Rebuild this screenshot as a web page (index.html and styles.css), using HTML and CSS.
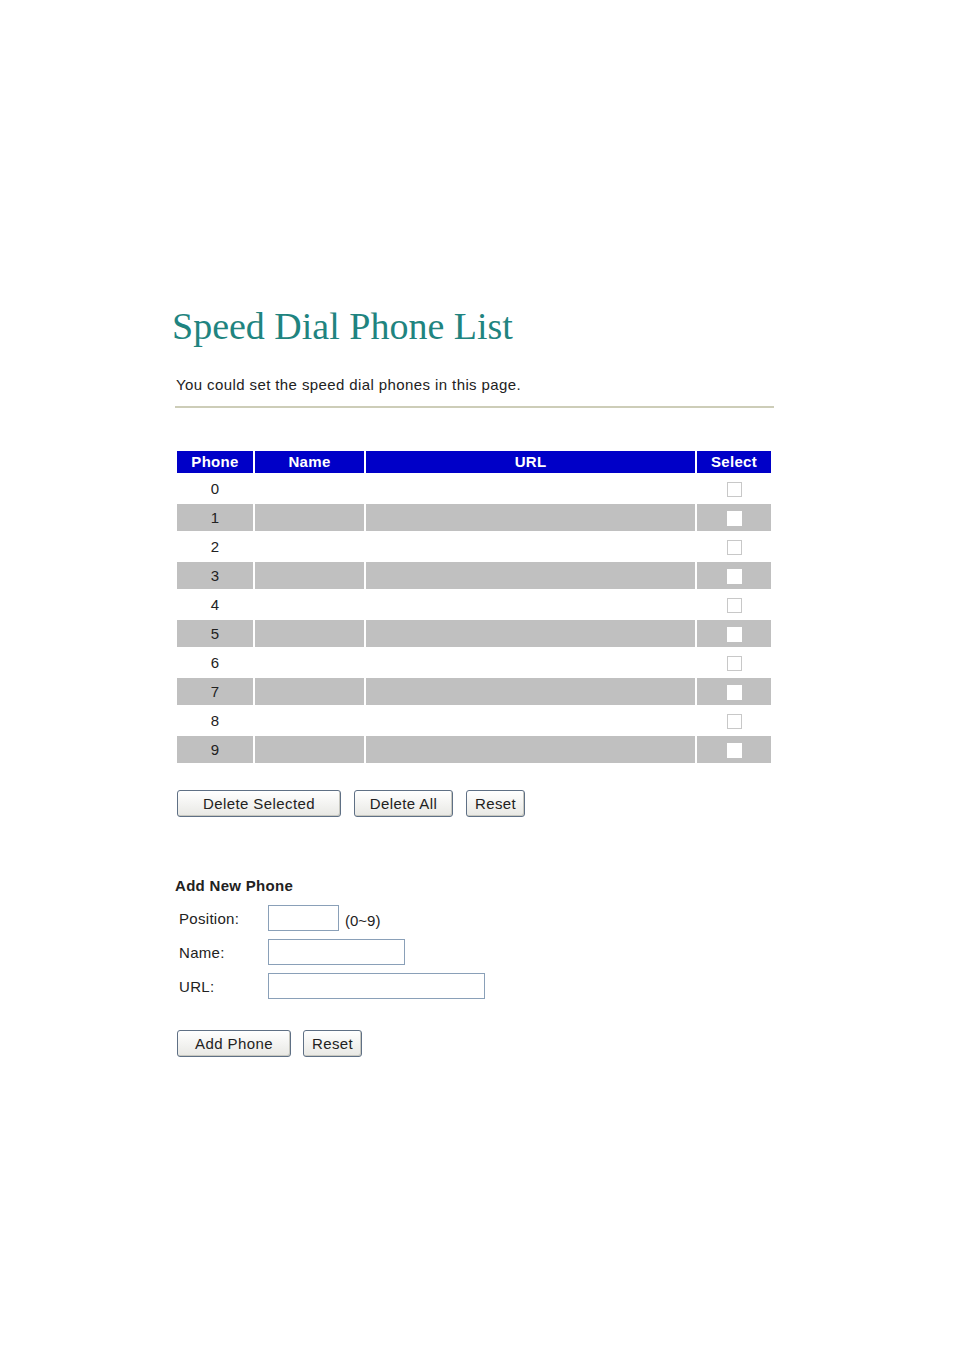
FILE: index.html
```html
<!DOCTYPE html>
<html>
<head>
<meta charset="utf-8">
<link rel="stylesheet" href="styles.css">
</head>
<body>
<div class="page">
  <h1 class="title">Speed Dial Phone List</h1>
  <p class="desc">You could set the speed dial phones in this page.</p>
  <div class="rule"></div>
  <table class="list">
    <thead>
      <tr><th class="c-phone">Phone</th><th class="c-name">Name</th><th class="c-url">URL</th><th class="c-sel">Select</th></tr>
    </thead>
    <tbody>
      <tr class="odd"><td>0</td><td></td><td></td><td><span class="box"></span></td></tr>
      <tr class="even"><td>1</td><td></td><td></td><td><span class="box"></span></td></tr>
      <tr class="odd"><td>2</td><td></td><td></td><td><span class="box"></span></td></tr>
      <tr class="even"><td>3</td><td></td><td></td><td><span class="box"></span></td></tr>
      <tr class="odd"><td>4</td><td></td><td></td><td><span class="box"></span></td></tr>
      <tr class="even"><td>5</td><td></td><td></td><td><span class="box"></span></td></tr>
      <tr class="odd"><td>6</td><td></td><td></td><td><span class="box"></span></td></tr>
      <tr class="even"><td>7</td><td></td><td></td><td><span class="box"></span></td></tr>
      <tr class="odd"><td>8</td><td></td><td></td><td><span class="box"></span></td></tr>
      <tr class="even"><td>9</td><td></td><td></td><td><span class="box"></span></td></tr>
    </tbody>
  </table>
  <div class="btns">
    <button class="btn w-delsel">Delete Selected</button>
    <button class="btn w-delall">Delete All</button>
    <button class="btn w-reset">Reset</button>
  </div>
  <h2 class="sub">Add New Phone</h2>
  <div class="form">
    <div class="frow"><span class="lbl">Position:</span><span class="inp w-pos"></span><span class="hint">(0~9)</span></div>
    <div class="frow"><span class="lbl">Name:</span><span class="inp w-name"></span></div>
    <div class="frow"><span class="lbl">URL:</span><span class="inp w-url"></span></div>
  </div>
  <div class="btns2">
    <button class="btn w-add">Add Phone</button>
    <button class="btn w-reset2">Reset</button>
  </div>
</div>
</body>
</html>
```
FILE: styles.css
```css
html, body { margin: 0; padding: 0; background: #fff; }
body { font-family: "Liberation Sans", Arial, sans-serif; color: #222; }
.page { padding: 300px 0 0 175px; width: 600px; }
.title {
  margin: 0 0 0 -3px;
  font-family: "Liberation Serif", "Times New Roman", serif;
  font-weight: normal;
  font-size: 38px;
  line-height: 52px;
  color: #1f8480;
  letter-spacing: 0;
}
.desc { margin: 24px 0 0 1px; font-size: 15px; line-height: 18px; color: #222; letter-spacing: 0.4px; }
.rule { margin-top: 12px; height: 2px; background: #cdcdb8; width: 599px; }
.list { margin-top: 41px; border-collapse: separate; border-spacing: 2px; width: 598px; table-layout: fixed; }
.list th {
  background: #0000c8; color: #fff; font-size: 15px; font-weight: bold; height: 22px; padding: 0; line-height: 22px; letter-spacing: 0.3px;
}
.c-phone { width: 76px; }
.c-name { width: 109px; }
.c-url { width: 329px; }
.c-sel { width: 74px; }
.list td { height: 27px; padding: 0; text-align: center; font-size: 15px; color: #222; }
.even td { background: #c0c0c0; }
.box { display: inline-block; width: 13px; height: 13px; vertical-align: middle; border: 1px solid #c8c8c8; background: #fff; margin-left: 1px; }
.even .box { border-color: #fff; }
.btns { margin-top: 25px; display: flex; gap: 13px; padding-left: 2px; }
.btn {
  font-family: "Liberation Sans", Arial, sans-serif; font-size: 15px; color: #222; letter-spacing: 0.4px;
  height: 27px; padding: 0; border: 1px solid #5f7085; border-radius: 3px; box-sizing: border-box;
  background: linear-gradient(#ffffff, #e8e8e4);
  box-shadow: inset -1px -1px 0 #c8c8c0;
}
.w-delsel { width: 164px; }
.w-delall { width: 99px; }
.w-reset { width: 59px; }
.sub { margin: 59px 0 0 0; font-size: 15px; font-weight: bold; line-height: 20px; color: #222; letter-spacing: 0.3px; }
.form { margin-top: 9px; display: flex; flex-direction: column; gap: 8px; padding-left: 4px; }
.frow { display: flex; align-items: center; height: 26px; }
.lbl { width: 89px; font-size: 15px; letter-spacing: 0.3px; }
.inp { height: 26px; border: 1px solid #8aa0b8; background: #fff; box-sizing: border-box; }
.w-pos { width: 71px; }
.w-name { width: 137px; }
.w-url { width: 217px; }
.hint { margin-left: 6px; font-size: 15px; position: relative; top: 2px; }
.btns2 { margin-top: 31px; display: flex; gap: 12px; padding-left: 2px; }
.w-add { width: 114px; }
.w-reset2 { width: 59px; }
```
